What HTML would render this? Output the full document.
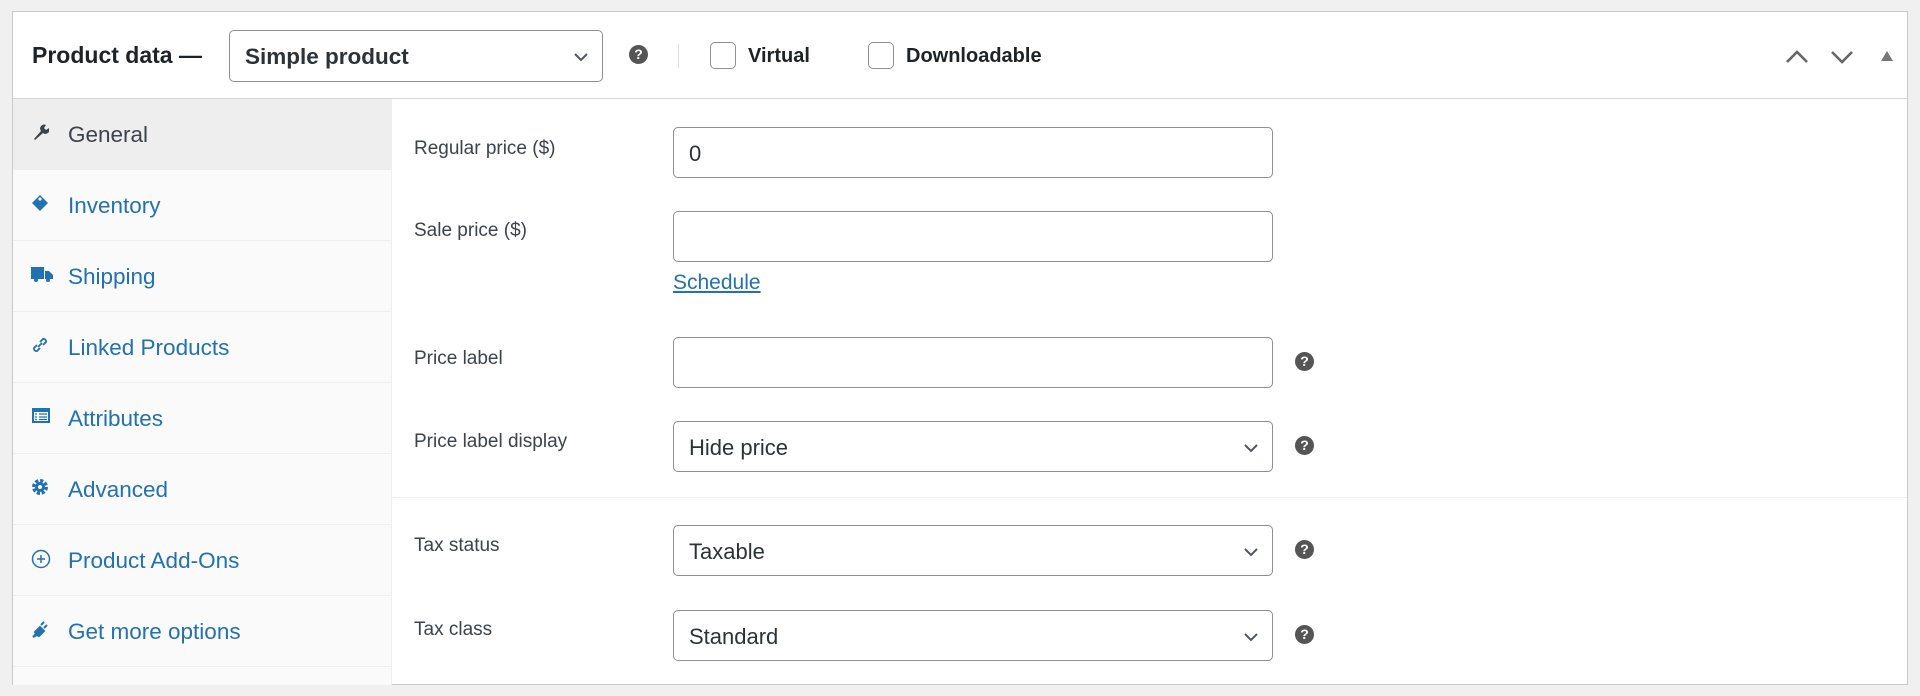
<!DOCTYPE html>
<html><head><meta charset="utf-8"><style>
*{box-sizing:border-box;margin:0;padding:0}
body{width:1920px;height:696px;background:#f0f0f1;font-family:"Liberation Sans",Arial,sans-serif;position:relative;overflow:hidden}
.box{position:absolute;left:12px;top:11px;width:1896px;height:674px;background:#fff;border:1px solid #c9c9cc}
.a{position:absolute}
.hdr{left:0;top:0;width:1894px;height:87px;border-bottom:1px solid #d6d6d8}
.side{left:0;top:87px;width:379px;height:586px;background:#fafafa;border-right:1px solid #eee}
.item{position:absolute;left:0;width:379px;height:71px;border-bottom:1px solid #eee;color:#2271b1;font-size:22.5px}
.item span{position:absolute;left:55px;top:23px}
.item svg{position:absolute;left:18px;top:24px}
.lbl{font-size:19px;color:#3c434a;left:401px}
.inp{left:660px;width:600px;height:51px;border:1.5px solid #8c8f94;border-radius:5px;font-size:22px;color:#2c3338;padding:13px 0 0 15px}
.chev{position:absolute;right:13px;top:18px}
.help{width:19px;height:19px;border-radius:50%;background:#555;color:#fff;font-size:14px;font-weight:bold;text-align:center;line-height:19px}
.cb{width:26px;height:27px;border:1.5px solid #8c8f94;border-radius:5px;background:#fff}
</style></head><body>
<div class="box">
<div class="a hdr">
 <div class="a" style="left:19px;top:30px;font-size:23px;font-weight:bold;color:#1d2327">Product data —</div>
 <div class="a inp" style="left:216px;top:18px;width:374px;height:52px;font-weight:bold;font-size:22.5px;padding-top:13px">Simple product<svg class="chev" width="16" height="16" viewBox="0 0 16 16"><path d="M2 5l6 6 6-6" fill="none" stroke="#50575e" stroke-width="2"/></svg></div>
 <div class="a help" style="left:616px;top:33px">?</div>
 <div class="a" style="left:665px;top:32px;width:1px;height:24px;background:#ddd"></div>
 <div class="a cb" style="left:697px;top:30px"></div>
 <div class="a" style="left:735px;top:33px;font-size:20px;font-weight:bold;color:#1d2327">Virtual</div>
 <div class="a cb" style="left:855px;top:30px"></div>
 <div class="a" style="left:893px;top:33px;font-size:20px;font-weight:bold;color:#1d2327">Downloadable</div>
 <svg class="a" style="left:1772px;top:38px" width="24" height="14" viewBox="0 0 24 14"><path d="M2 12L12 2l10 10" fill="none" stroke="#666" stroke-width="2.6"/></svg>
 <svg class="a" style="left:1817px;top:38px" width="24" height="14" viewBox="0 0 24 14"><path d="M2 2l10 10L22 2" fill="none" stroke="#666" stroke-width="2.6"/></svg>
 <svg class="a" style="left:1868px;top:39px" width="12" height="10" viewBox="0 0 12 10"><path d="M6 0L12 10H0z" fill="#777"/></svg>
</div>
<div class="a side">
 <div class="item" style="top:0;background:#eee;color:#3c434a"><svg width="18" height="18" viewBox="0 0 18 18"><path d="M3 16l7-8a4 4 0 0 1 5-6l-2 3 2 2 3-2a4 4 0 0 1-6 5l-8 7z" fill="#3c434a"/></svg><span>General</span></div>
 <div class="item" style="top:71px"><svg width="18" height="18" viewBox="0 0 18 18"><path d="M9 1l8 8-8 8-8-8z" fill="#2271b1"/><circle cx="9" cy="5" r="1.6" fill="#fff"/></svg><span>Inventory</span></div>
 <div class="item" style="top:142px"><svg width="22" height="18" viewBox="0 0 22 18"><path d="M0 2h13v12H0zM14 6h4l4 4v4h-8z" fill="#2271b1"/><circle cx="5" cy="15" r="2" fill="#2271b1"/><circle cx="17" cy="15" r="2" fill="#2271b1"/></svg><span>Shipping</span></div>
 <div class="item" style="top:213px"><svg width="18" height="18" viewBox="0 0 18 18"><path d="M7 11l4-4M6 9l-3 3a2.5 2.5 0 0 0 3 3l3-3M12 9l3-3a2.5 2.5 0 0 0-3-3L9 6" fill="none" stroke="#2271b1" stroke-width="1.8"/></svg><span>Linked Products</span></div>
 <div class="item" style="top:284px"><svg width="20" height="18" viewBox="0 0 20 18"><rect x="1" y="1" width="18" height="15" fill="#2271b1"/><rect x="3" y="5" width="14" height="9" fill="#fff"/><path d="M4 7h2M8 7h8M4 10h2M8 10h8M4 12.5h2M8 12.5h8" stroke="#2271b1" stroke-width="1.3"/></svg><span>Attributes</span></div>
 <div class="item" style="top:355px"><svg width="18" height="18" viewBox="0 0 18 18"><circle cx="9" cy="9" r="6" fill="none" stroke="#2271b1" stroke-width="4" stroke-dasharray="3 1.7"/><circle cx="9" cy="9" r="5" fill="#2271b1"/><circle cx="9" cy="9" r="2" fill="#fafafa"/></svg><span>Advanced</span></div>
 <div class="item" style="top:426px"><svg width="20" height="20" viewBox="0 0 20 20"><circle cx="10" cy="10" r="8.5" fill="none" stroke="#2271b1" stroke-width="1.5"/><path d="M10 6v8M6 10h8" stroke="#2271b1" stroke-width="1.5"/></svg><span>Product Add-Ons</span></div>
 <div class="item" style="top:497px"><svg width="18" height="18" viewBox="0 0 18 18"><path d="M2 17l3-3-1-2 5-5 4 4-5 5-2-1zM10 5l3-3M13 8l3-3" stroke="#2271b1" stroke-width="2" fill="#2271b1"/></svg><span>Get more options</span></div>
</div>
<div class="a lbl" style="top:126px">Regular price ($)</div>
<div class="a inp" style="top:115px">0</div>
<div class="a lbl" style="top:208px">Sale price ($)</div>
<div class="a inp" style="top:199px"></div>
<div class="a" style="left:660px;top:259px;font-size:21px;color:#2271b1;text-decoration:underline">Schedule</div>
<div class="a lbl" style="top:336px">Price label</div>
<div class="a inp" style="top:325px"></div>
<div class="a help" style="left:1282px;top:340px">?</div>
<div class="a lbl" style="top:419px">Price label display</div>
<div class="a inp" style="top:409px">Hide price<svg class="chev" width="16" height="16" viewBox="0 0 16 16"><path d="M2 5l6 6 6-6" fill="none" stroke="#50575e" stroke-width="2"/></svg></div>
<div class="a help" style="left:1282px;top:424px">?</div>
<div class="a" style="left:380px;top:485px;width:1514px;height:1px;background:#eee"></div>
<div class="a lbl" style="top:523px">Tax status</div>
<div class="a inp" style="top:513px">Taxable<svg class="chev" width="16" height="16" viewBox="0 0 16 16"><path d="M2 5l6 6 6-6" fill="none" stroke="#50575e" stroke-width="2"/></svg></div>
<div class="a help" style="left:1282px;top:528px">?</div>
<div class="a lbl" style="top:607px">Tax class</div>
<div class="a inp" style="top:598px">Standard<svg class="chev" width="16" height="16" viewBox="0 0 16 16"><path d="M2 5l6 6 6-6" fill="none" stroke="#50575e" stroke-width="2"/></svg></div>
<div class="a help" style="left:1282px;top:613px">?</div>
</div>
</body></html>
